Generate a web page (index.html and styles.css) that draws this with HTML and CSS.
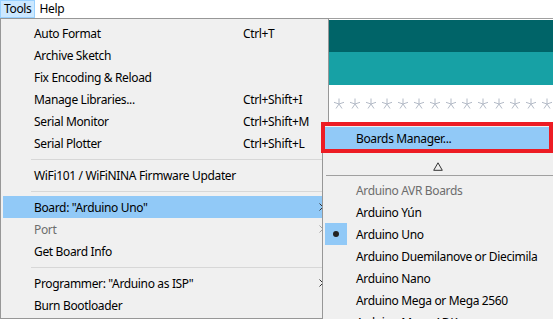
FILE: index.html
```html
<!DOCTYPE html>
<html lang="en">
<head>
  <meta charset="UTF-8">
  <title>Arduino - Tools menu</title>
  <link rel="stylesheet" href="styles.css">
</head>
<body>
  <!-- Menu bar -->
  <div class="menubar">
    <span class="menubar-item active">Tools</span>
    <span class="menubar-item">Help</span>
  </div>

  <!-- IDE behind the menus -->
  <div class="ide">
    <div class="toolbar"></div>
    <div class="tabs"></div>
    <div class="stars">
      <svg width="100%" height="12">
        <defs>
          <pattern id="star" x="14" y="0" width="16" height="12" patternUnits="userSpaceOnUse">
            <path d="M5 0.5V6M5 6L10 4.3M5 6L8 10.5M5 6L2 10.5M5 6L0 4.3" stroke="#b3bac6" stroke-width="1" fill="none"/>
          </pattern>
        </defs>
        <rect width="100%" height="12" fill="url(#star)"/>
      </svg>
    </div>
    <div class="editor">void setup() { pinMode(LED_BUILTIN, OUTPUT);</div>
  </div>

  <!-- Tools menu -->
  <div class="menu tools-menu">
    <div class="item"><span class="label">Auto Format</span><span class="key">Ctrl+T</span></div>
    <div class="item"><span class="label">Archive Sketch</span></div>
    <div class="item"><span class="label">Fix Encoding &amp; Reload</span></div>
    <div class="item"><span class="label">Manage Libraries...</span><span class="key">Ctrl+Shift+I</span></div>
    <div class="item"><span class="label">Serial Monitor</span><span class="key">Ctrl+Shift+M</span></div>
    <div class="item"><span class="label">Serial Plotter</span><span class="key">Ctrl+Shift+L</span></div>
    <div class="sep"></div>
    <div class="item"><span class="label">WiFi101 / WiFiNINA Firmware Updater</span></div>
    <div class="sep"></div>
    <div class="item hover"><span class="label">Board: "Arduino Uno"</span><span class="key"></span>
      <svg class="arrow" width="5" height="8"><path d="M0.5 0.5L4 4L0.5 7.5" stroke="#333" fill="none"/></svg></div>
    <div class="item disabled"><span class="label">Port</span><span class="key"></span>
      <svg class="arrow" width="5" height="8"><path d="M0.5 0.5L4 4L0.5 7.5" stroke="#a0a0a0" fill="none"/></svg></div>
    <div class="item"><span class="label">Get Board Info</span></div>
    <div class="sep"></div>
    <div class="item"><span class="label">Programmer: "Arduino as ISP"</span><span class="key"></span>
      <svg class="arrow" width="5" height="8"><path d="M0.5 0.5L4 4L0.5 7.5" stroke="#333" fill="none"/></svg></div>
    <div class="item"><span class="label">Burn Bootloader</span></div>
  </div>

  <!-- Board submenu -->
  <div class="menu board-menu">
    <div class="item hover"><span class="label">Boards Manager...</span></div>
    <div class="scroll-up">
      <svg width="10" height="9"><path d="M5 0.8L9.3 8.3H0.7Z" stroke="#333" fill="none"/></svg>
    </div>
    <div class="sub-sep"></div>
    <div class="item disabled"><span class="label">Arduino AVR Boards</span></div>
    <div class="item"><span class="label">Arduino Yún</span></div>
    <div class="item checked"><span class="check"><span class="dot"></span></span><span class="label">Arduino Uno</span></div>
    <div class="item"><span class="label">Arduino Duemilanove or Diecimila</span></div>
    <div class="item"><span class="label">Arduino Nano</span></div>
    <div class="item"><span class="label">Arduino Mega or Mega 2560</span></div>
    <div class="item"><span class="label">Arduino Mega ADK</span></div>
  </div>

  <!-- red highlight drawn over the screenshot -->
  <div class="callout"></div>
</body>
</html>
```

FILE: styles.css
```css
html, body {
  margin: 0;
  padding: 0;
}
body {
  width: 553px;
  height: 319px;
  overflow: hidden;
  position: relative;
  background: #fff;
  font-family: "Segoe UI", "Noto Sans", sans-serif;
  font-size: 12px;
  letter-spacing: -0.35px;
  color: #000;
}

/* menu bar */
.menubar {
  display: flex;
  height: 18px;
  border-bottom: 1px solid #a0a0a0;
  background: #fff;
}
.menubar-item {
  height: 16px;
  line-height: 16px;
  padding: 0 3px;
  border: 1px solid transparent;
}
.menubar-item.active {
  background: #cce8ff;
  border-color: #99d1ff;
}

/* ide background */
.ide {
  padding-top: 1px;
}
.toolbar {
  height: 32px;
  background: #006468;
}
.tabs {
  height: 33px;
  background: #17a1a5;
}
.stars {
  height: 37px;
  display: flex;
  align-items: center;
}
.stars svg {
  display: block;
}
.editor {
  padding-top: 193px;
  padding-left: 4px;
  font-family: "Liberation Mono", monospace;
  font-size: 13px;
  letter-spacing: 0;
  color: #434f54;
  white-space: nowrap;
}

/* popup menus */
.menu {
  position: absolute;
  background: #f0f0f0;
  border: 1px solid #979797;
  padding: 3px 2px 1px;
}
.tools-menu {
  left: 0;
  top: 18px;
  width: 323px;
  height: 295px;
}
.board-menu {
  left: 322px;
  top: 123px;
  width: 260px;
  height: 220px;
}
.item {
  display: grid;
  grid-template-columns: 240px 1fr 16px;
  align-items: center;
  height: 22px;
  white-space: nowrap;
}
.item .label {
  padding-left: 31px;
}
.item.hover {
  background: #91c9f7;
}
.item.disabled {
  color: #6d6d6d;
}
.item .arrow {
  display: block;
  justify-self: end;
  margin-right: 2px;
}
.sep {
  height: 10px;
  display: flex;
  align-items: center;
}
.sep::before {
  content: "";
  flex: 1;
  height: 1px;
  margin-left: 28px;
  background: #d7d7d7;
}

/* board submenu parts */
.board-menu .item {
  display: flex;
}
.scroll-up {
  height: 26px;
  display: flex;
  align-items: flex-end;
  justify-content: center;
  padding-right: 35px;
  box-sizing: border-box;
  padding-bottom: 4px;
}
.scroll-up svg {
  display: block;
}
.sub-sep {
  height: 1px;
  margin: 0 30px 3px 1px;
  background: #a0a0a0;
}
.item.checked .check {
  width: 22px;
  height: 22px;
  background: #91c9f7;
  display: flex;
  align-items: center;
  justify-content: center;
}
.item.checked .label {
  padding-left: 9px;
}
.dot {
  width: 6px;
  height: 6px;
  border-radius: 50%;
  background: #222;
}

.callout {
  position: absolute;
  left: 321px;
  top: 122px;
  width: 232px;
  height: 31px;
  box-sizing: border-box;
  border: 4px solid #ed1c24;
}
```
